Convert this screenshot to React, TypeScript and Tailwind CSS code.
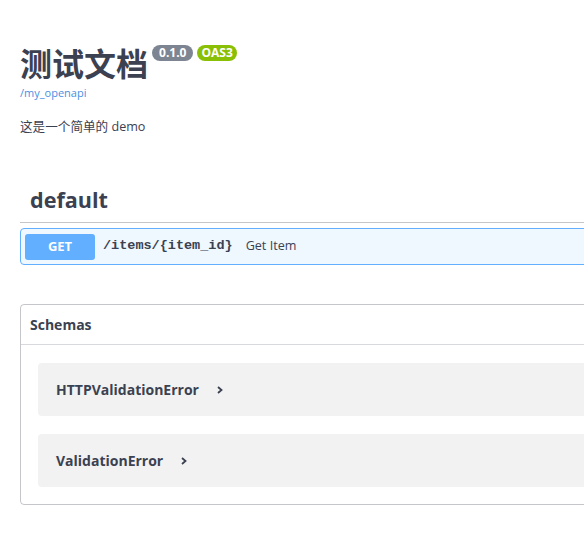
import React from 'react';

const ChevronRight: React.FC = () => (
    <svg width="10" height="10" viewBox="0 0 10 10" className="shrink-0">
        <path d="M3 2 L6.5 5 L3 8" fill="none" stroke="#3b4151" strokeWidth="1.8" />
    </svg>
);

const SchemaItem: React.FC<{ name: string }> = ({ name }) => (
    <div className="h-[53px] rounded-[4px] bg-[#f2f2f2] flex items-center pl-[18px] gap-[16px]">
        <span className="text-[14px] font-bold text-[#3b4151]">{name}</span>
        <ChevronRight />
    </div>
);

const App: React.FC = () => {
    return (
        <div className="w-[584px] h-[536px] overflow-hidden bg-white text-[#3b4151] font-['Open_Sans','Noto_Sans_CJK_SC',sans-serif]">
            <div className="w-[760px] pl-5">
                {/* Info */}
                <div className="pt-[40px]">
                    <div className="flex items-start">
                        <h2 className="text-[32px] font-bold leading-[44px] font-['Noto_Sans_CJK_SC',sans-serif]">测试文档</h2>
                        <span className="ml-[4px] mt-[5px] h-4 px-[7px] rounded-full bg-[#7d8492] text-white text-[12px] font-bold leading-4">0.1.0</span>
                        <span className="ml-[4px] mt-[5px] h-4 px-[4px] rounded-full bg-[#89bf04] text-white text-[12px] font-bold leading-4">OAS3</span>
                    </div>
                    <a href="#" className="block text-[11px] leading-[18px] text-[#4990e2]">/my_openapi</a>
                    <p className="mt-[15px] text-[12.6px] leading-5">这是一个简单的 demo</p>
                </div>

                {/* Tag section */}
                <div className="mt-[42px]">
                    <h3 className="h-[44px] flex items-center pl-[10px] text-[21.6px] font-bold border-b border-[#3b4151]/30">default</h3>
                    <div className="mt-[5px] h-[37px] border border-[#61affe] rounded-[4px] bg-[#eff7ff] flex items-center pl-[4px]">
                        <span className="w-[70px] h-[26px] rounded-[3px] bg-[#61affe] text-white text-[13px] font-bold flex items-center justify-center">GET</span>
                        <span className="ml-[8px] font-['Liberation_Mono',monospace] text-[13.5px] font-bold">/items/{'{item_id}'}</span>
                        <span className="ml-[13px] text-[12.6px]">Get Item</span>
                    </div>
                </div>

                {/* Schemas */}
                <section className="mt-[39px] border border-[#3b4151]/30 rounded-[4px]">
                    <div className="h-[40px] flex items-center pl-[9px] border-b border-[#3b4151]/20 text-[14px] font-bold">Schemas</div>
                    <div className="pl-[17px] pt-[18px] pb-[17px] flex flex-col gap-[18px]">
                        <SchemaItem name="HTTPValidationError" />
                        <SchemaItem name="ValidationError" />
                    </div>
                </section>
            </div>
        </div>
    );
};

export default App;
